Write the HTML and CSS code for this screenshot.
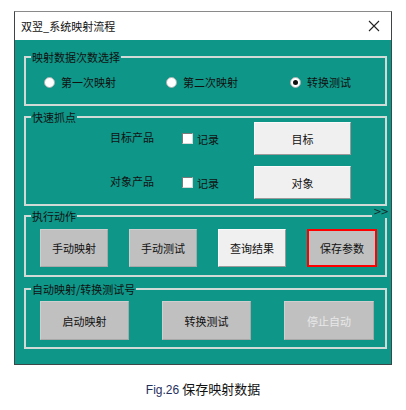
FILE: index.html
```html
<!DOCTYPE html>
<html lang="zh-CN">
<head>
    <meta charset="UTF-8">
    <title>双翌_系统映射流程</title>
    <link rel="stylesheet" href="styles.css">
</head>
<body>
    <div class="window">
        <div class="titlebar">
            <span class="title">双翌_系统映射流程</span>
            <svg class="close" width="12" height="12" viewBox="0 0 12 12">
                <path d="M1 1 L11 11 M11 1 L1 11" stroke="#222" stroke-width="1.1" fill="none"/>
            </svg>
        </div>

        <div class="client">
            <div class="group g1">
                <span class="legend">映射数据次数选择</span>
                <div class="radios">
                    <label class="opt"><span class="radio"></span>第一次映射</label>
                    <label class="opt"><span class="radio"></span>第二次映射</label>
                    <label class="opt"><span class="radio checked"></span>转换测试</label>
                </div>
            </div>

            <div class="group g2">
                <span class="legend">快速抓点</span>
                <div class="pick-row">
                    <span class="pick-name">目标产品</span>
                    <span class="check"></span>
                    <span class="check-text">记录</span>
                    <button class="btn light pick-btn">目标</button>
                </div>
                <div class="pick-row">
                    <span class="pick-name">对象产品</span>
                    <span class="check"></span>
                    <span class="check-text">记录</span>
                    <button class="btn light pick-btn">对象</button>
                </div>
            </div>

            <div class="group g3">
                <span class="legend">执行动作</span>
                <span class="more">&gt;&gt;</span>
                <div class="btn-row">
                    <button class="btn act">手动映射</button>
                    <button class="btn act">手动测试</button>
                    <button class="btn act light">查询结果</button>
                    <button class="btn act active">保存参数</button>
                </div>
            </div>

            <div class="group g4">
                <span class="legend">自动映射/转换测试号</span>
                <div class="btn-row wide">
                    <button class="btn auto">启动映射</button>
                    <button class="btn auto">转换测试</button>
                    <button class="btn auto disabled">停止自动</button>
                </div>
            </div>
        </div>
    </div>

    <p class="caption"><span class="fig">Fig.26</span> 保存映射数据</p>
</body>
</html>
```

FILE: styles.css
```css
body {
    margin: 0;
    background: #fff;
    font-family: "Noto Sans CJK SC", "Microsoft YaHei", sans-serif;
    font-size: 11px;
    color: #111;
}

.window {
    width: 378px;
    margin: 11px 0 0 14px;
    border: 1px solid #3c4646;
    border-top-color: #8a8a8a;
    box-sizing: border-box;
}

.titlebar {
    height: 28px;
    background: #fff;
    display: flex;
    align-items: center;
    justify-content: space-between;
    padding: 0 11px 0 6px;
}

.title {
    font-size: 11px;
    line-height: 16px;
    color: #111;
}

.client {
    background: #0e9688;
    height: 324px;
    padding: 16px 4px 0 9px;
    box-sizing: border-box;
}

.group {
    position: relative;
    border: 2px solid #d2dad8;
    box-sizing: border-box;
}

.legend {
    position: absolute;
    top: -9px;
    left: 5px;
    padding: 0 1px;
    line-height: 16px;
    background: #0e9688;
    color: #111;
}

.g1 { height: 50px; }
.g2 { height: 90px; margin-top: 10px; }
.g3 { height: 62px; margin-top: 9px; }
.g4 { height: 61px; margin-top: 11px; }

/* radio row */
.radios {
    display: grid;
    grid-template-columns: 122px 124px auto;
    padding: 16px 0 0 18px;
}

.opt {
    display: flex;
    align-items: center;
    gap: 6px;
    line-height: 16px;
}

.radio {
    width: 11px;
    height: 11px;
    border-radius: 50%;
    background: #fff;
    border: 1px solid #a8b0b0;
    box-sizing: border-box;
    display: flex;
    align-items: center;
    justify-content: center;
}

.radio.checked::after {
    content: "";
    width: 5px;
    height: 5px;
    border-radius: 50%;
    background: #111;
}

/* quick pick rows */
.pick-row {
    display: flex;
    align-items: center;
    padding-left: 84px;
    height: 33px;
}

.g2 .pick-row:first-of-type { margin-top: 4px; }
.g2 .pick-row + .pick-row { margin-top: 11px; }

.pick-name {
    width: 44px;
    margin-top: -3px;
}

.check {
    width: 11px;
    height: 11px;
    margin-left: 28px;
    background: #fff;
    border: 1px solid #7a7a7a;
    border-right-color: #d8d8d8;
    border-bottom-color: #d8d8d8;
    box-sizing: border-box;
}

.check-text {
    margin-left: 4px;
    width: 22px;
}

.pick-btn {
    margin-left: 35px;
    width: 97px;
    height: 33px;
}

/* buttons */
.btn {
    font-family: inherit;
    font-size: 11px;
    color: #111;
    background: #c0c0c0;
    border: 1px solid #cfcfcf;
    border-right-color: #a8a8a8;
    border-bottom-color: #a8a8a8;
    padding: 0;
    box-sizing: border-box;
}

.btn.light {
    background: #f0f0f0;
    border-color: #fafafa #9a9a9a #9a9a9a #fafafa;
}

.btn-row {
    display: flex;
    gap: 21px;
    padding: 12px 0 0 14px;
}

.act {
    width: 68px;
    height: 38px;
}

.act.active {
    width: 70px;
    border: 2px solid #ff0000;
}

.more {
    position: absolute;
    top: -11px;
    right: -5px;
    font-family: "DejaVu Sans", sans-serif;
    font-size: 10px;
    letter-spacing: -1px;
    color: #1a2a2a;
    line-height: 12px;
    padding: 0 2px 0 1px;
    background: #0e9688;
}

.btn-row.wide {
    gap: 33px;
    padding-top: 11px;
}

.auto {
    width: 89px;
    height: 39px;
}

.auto.disabled {
    width: 90px;
    color: #e8e8e8;
}

.caption {
    margin: 16px 0 0;
    text-align: center;
    font-size: 13px;
    line-height: 16px;
    color: #111;
}

.fig {
    font-family: "Liberation Sans", "Noto Sans", sans-serif;
    color: #1f3060;
    font-size: 12px;
}
```
